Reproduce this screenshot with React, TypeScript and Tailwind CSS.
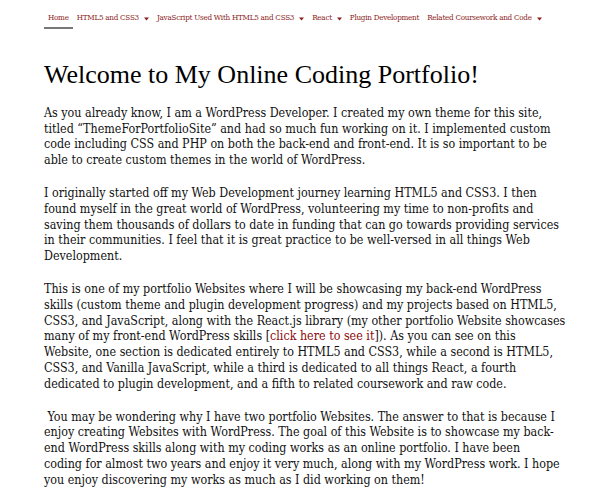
const navItems = [
  { label: "Home", active: true, caret: false },
  { label: "HTML5 and CSS3", active: false, caret: true },
  { label: "JavaScript Used With HTML5 and CSS3", active: false, caret: true },
  { label: "React", active: false, caret: true },
  { label: "Plugin Development", active: false, caret: false },
  { label: "Related Coursework and Code", active: false, caret: true },
];

const paragraphs: React.ReactNode[][] = [
  [
    "As you already know, I am a WordPress Developer. I created my own theme for this site,",
    "titled “ThemeForPortfolioSite” and had so much fun working on it. I implemented custom",
    "code including CSS and PHP on both the back-end and front-end. It is so important to be",
    "able to create custom themes in the world of WordPress.",
  ],
  [
    "I originally started off my Web Development journey learning HTML5 and CSS3. I then",
    "found myself in the great world of WordPress, volunteering my time to non-profits and",
    "saving them thousands of dollars to date in funding that can go towards providing services",
    "in their communities. I feel that it is great practice to be well-versed in all things Web",
    "Development.",
  ],
  [
    "This is one of my portfolio Websites where I will be showcasing my back-end WordPress",
    "skills (custom theme and plugin development progress) and my projects based on HTML5,",
    "CSS3, and JavaScript, along with the React.js library (my other portfolio Website showcases",
    <>
      many of my front-end WordPress skills [
      <a href="#" className="text-[#8b0a0a]">
        click here to see it
      </a>
      ]). As you can see on this
    </>,
    "Website, one section is dedicated entirely to HTML5 and CSS3, while a second is HTML5,",
    "CSS3, and Vanilla JavaScript, while a third is dedicated to all things React, a fourth",
    "dedicated to plugin development, and a fifth to related coursework and raw code.",
  ],
  [
    "\u00a0You may be wondering why I have two portfolio Websites. The answer to that is because I",
    "enjoy creating Websites with WordPress. The goal of this Website is to showcase my back-",
    "end WordPress skills along with my coding works as an online portfolio. I have been",
    "coding for almost two years and enjoy it very much, along with my WordPress work. I hope",
    "you enjoy discovering my works as much as I did working on them!",
  ],
];

function Caret() {
  return (
    <svg width="5" height="4" viewBox="0 0 5 4" className="ml-[5px] mt-[1px]">
      <path d="M0 0.5 H5 L2.5 3.5 Z" fill="#8b1c1c" />
    </svg>
  );
}

export default function App() {
  return (
    <div className="bg-white min-h-[500px] text-[#111] pl-[44px] pr-[10px] font-['DejaVu_Serif_Condensed','DejaVu_Serif',serif]">
      {/* top menu */}
      <nav className="pt-[11px]">
        <ul className="flex items-center whitespace-nowrap">
          {navItems.map((item) => (
            <li
              key={item.label}
              className={`flex items-center px-[4px] pb-[2px] border-b-2 text-[8px] tracking-[-0.25px] leading-[14px] text-[#8b1c1c] ${
                item.active ? "border-[#777]" : "border-transparent"
              }`}
            >
              <span>{item.label}</span>
              {item.caret && <Caret />}
            </li>
          ))}
        </ul>
      </nav>

      <h1 className="mt-[31px] text-[26px] leading-[30px] font-['Liberation_Serif',serif] text-black">
        Welcome to My Online Coding Portfolio!
      </h1>

      <div className="mt-[15px] text-[12.4px] leading-[15.7px] space-y-[17.5px]">
        {paragraphs.map((lines, i) => (
          <p key={i} className="whitespace-nowrap">
            {lines.map((line, j) => (
              <span key={j} className="block">
                {line}
              </span>
            ))}
          </p>
        ))}
      </div>
    </div>
  );
}
